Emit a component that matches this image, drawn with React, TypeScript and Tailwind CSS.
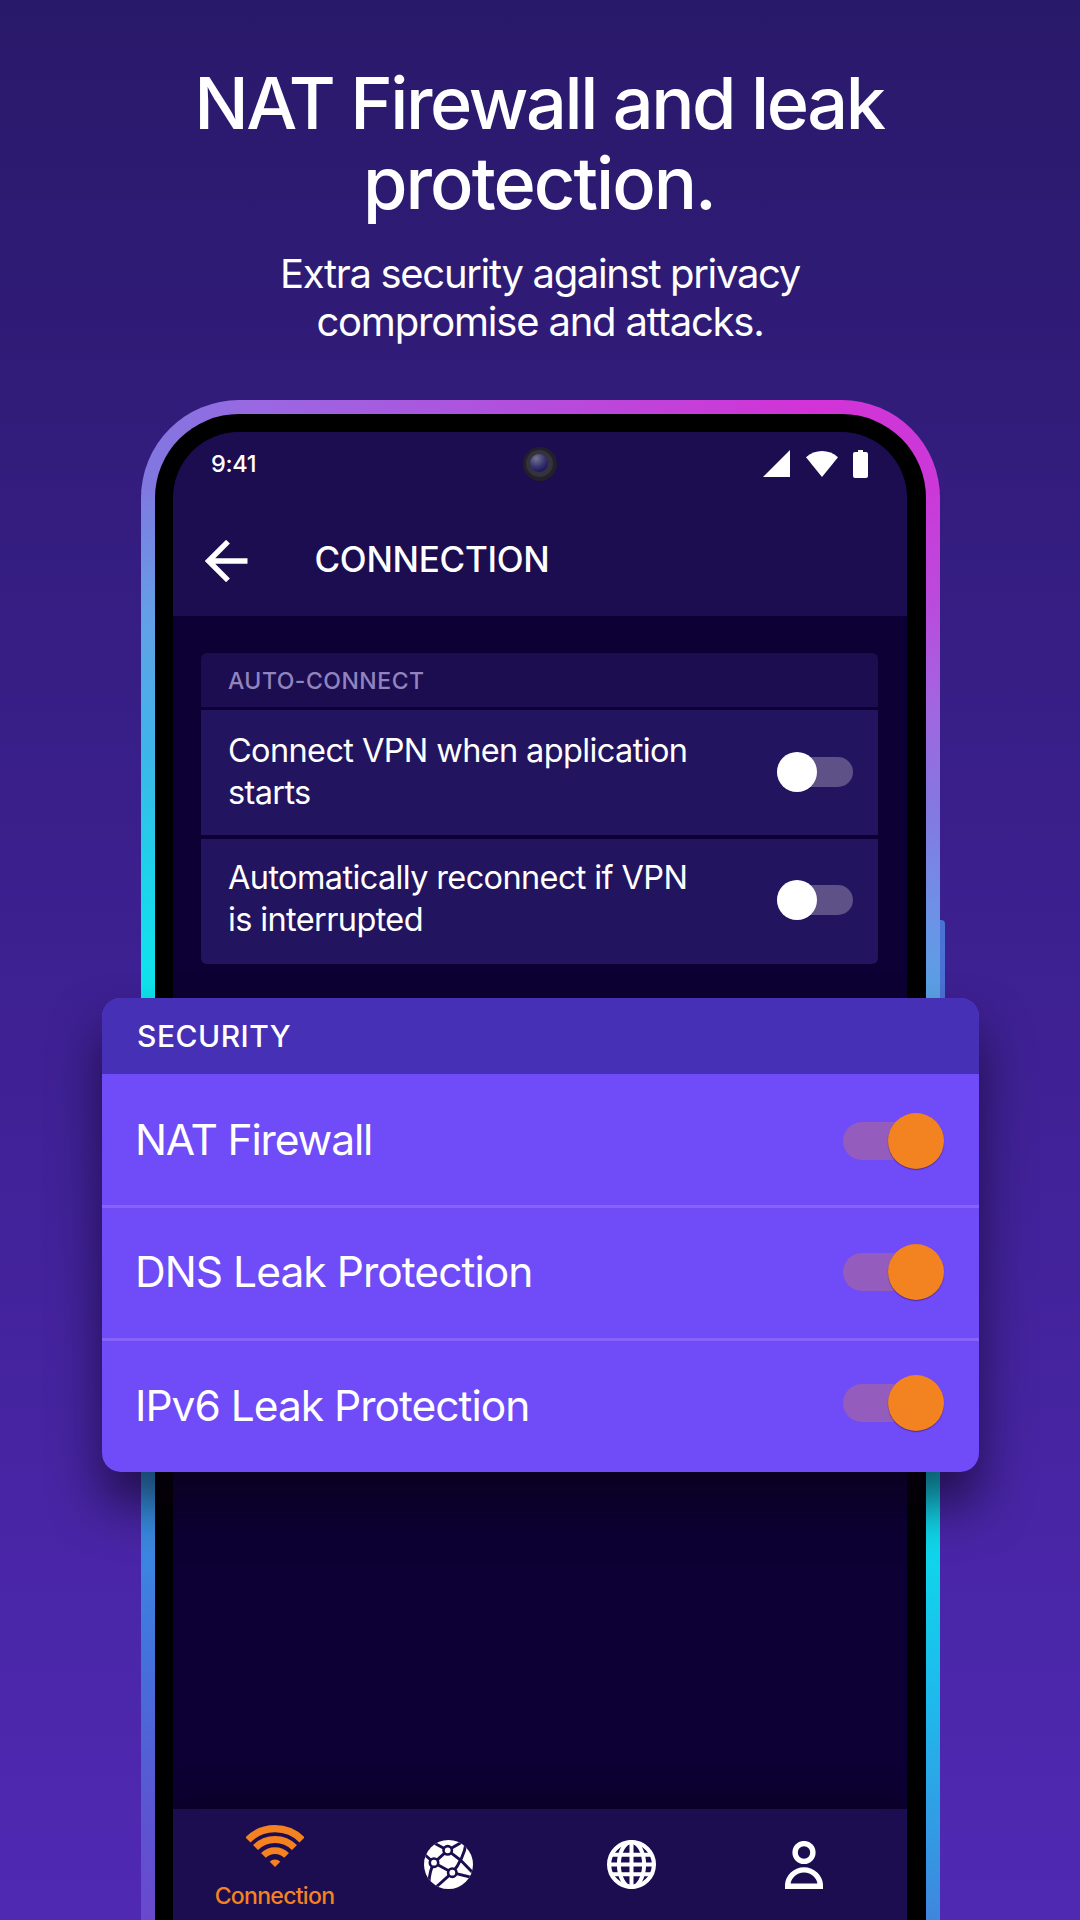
import { useState } from "react";
import clsx from "clsx";

const autoConnectItems = [
  {
    id: "startup",
    lines: ["Connect VPN when application", "starts"],
    labelClass: "-translate-y-[1.5px]",
    toggleClass: "-translate-y-px",
  },
  {
    id: "reconnect",
    lines: ["Automatically reconnect if VPN", "is interrupted"],
    labelClass: "-translate-y-[3px]",
    toggleClass: "-translate-y-[2px]",
  },
];

const securityItems = [
  {
    id: "nat",
    label: "NAT Firewall",
    rowClass: "h-[134px] border-b-3 border-[#8763fb]",
    labelClass: "tracking-[-1.15px]",
    toggleClass: "translate-y-px",
  },
  {
    id: "dns",
    label: "DNS Leak Protection",
    rowClass: "h-[133px] border-b-3 border-[#8763fb]",
    labelClass: "-translate-y-px tracking-[-0.95px]",
    toggleClass: "-translate-y-px",
  },
  {
    id: "ipv6",
    label: "IPv6 Leak Protection",
    rowClass: "h-[131px]",
    labelClass: "-translate-y-px tracking-[-1px]",
    toggleClass: "-translate-y-[4px]",
  },
];

function SignalIcon() {
  return (
    <svg width="27" height="27" viewBox="0 0 27 27" fill="white">
      <path d="M27 0V27H0Z" />
    </svg>
  );
}

function StatusWifiIcon() {
  return (
    <svg width="32" height="26" viewBox="0 0 32 26" fill="white">
      <path d="M0 6.2C9 -2 23 -2 32 6.2L16 26Z" />
    </svg>
  );
}

function BatteryIcon() {
  return (
    <svg width="15" height="28" viewBox="0 0 15 28" fill="white">
      <path d="M5 0h5v2h3a2 2 0 0 1 2 2v22a2 2 0 0 1-2 2H2a2 2 0 0 1-2-2V4a2 2 0 0 1 2-2h3Z" />
    </svg>
  );
}

function BackIcon() {
  return (
    <svg width="43" height="42" viewBox="0 0 43 42" fill="none" stroke="white" strokeWidth="5.4">
      <path d="M23 1.7 3.6 21 23 40.3M4 21H42.5" />
    </svg>
  );
}

function ConnectionIcon() {
  return (
    <svg width="58" height="42" viewBox="0 0 58 42" fill="none" stroke="#f58220">
      <clipPath id="wedge">
        <path d="M29 42 -13 0V-4H71V0Z" />
      </clipPath>
      <g clipPath="url(#wedge)">
        <circle cx="29" cy="42" r="38.3" strokeWidth="7.2" />
        <circle cx="29" cy="42" r="27.5" strokeWidth="7" />
        <circle cx="29" cy="42" r="16.4" strokeWidth="6.6" />
        <circle cx="29" cy="42" r="7.6" fill="#f58220" stroke="none" />
      </g>
    </svg>
  );
}

function NetworkIcon() {
  return (
    <svg width="49" height="49" viewBox="0 0 49 49">
      <clipPath id="ball">
        <circle cx="24.5" cy="24.5" r="24.5" />
      </clipPath>
      <g clipPath="url(#ball)">
        <rect width="49" height="49" fill="white" />
        <g fill="none" stroke="#1b0d50" strokeWidth="2.9">
          <path d="M10 3 23.7 10.3 39 1.5" />
          <path d="M23.7 10.3 36.5 20 50 34" />
          <path d="M42 3C41 12 36 24 28.3 32.7" />
          <path d="M23.7 10.3 10 22.7 28.3 32.7 50 38" />
          <path d="M0 14 10 22.7C7 28 5.5 33 5 42" />
          <path d="M28.3 32.7 11 48" />
        </g>
        <g fill="white" stroke="#1b0d50" strokeWidth="2.6">
          <circle cx="23.7" cy="10.3" r="4.2" />
          <circle cx="10" cy="22.7" r="4.2" />
          <circle cx="28.3" cy="32.7" r="4.2" />
        </g>
      </g>
    </svg>
  );
}

function GlobeIcon() {
  return (
    <svg width="49" height="49" viewBox="0 0 49 49" fill="none" stroke="white" strokeWidth="4">
      <circle cx="24.5" cy="24.5" r="22.4" strokeWidth="4.2" />
      <ellipse cx="24.5" cy="24.5" rx="12.6" ry="22.6" />
      <path d="M24.5 2V47M2 24.5H47M5 14.7H44M5 34.3H44" />
    </svg>
  );
}

function PersonIcon() {
  return (
    <svg width="38" height="48" viewBox="0 0 38 48" fill="none" stroke="white" strokeWidth="5.4">
      <circle cx="19" cy="11.5" r="8.9" />
      <path d="M2.6 45.3a16.4 16.4 0 0 1 32.8 0Z" />
    </svg>
  );
}

function Camera() {
  return (
    <div className="flex size-[34px] items-center justify-center rounded-full bg-[#232029]">
      <div className="flex size-[27px] items-center justify-center rounded-full bg-[#34323f]">
        <div className="size-[18px] -translate-x-px -translate-y-px rounded-full bg-[radial-gradient(circle_at_35%_25%,#77758f,#3a3872_45%,#1d1258_80%)]" />
      </div>
    </div>
  );
}

type ToggleProps = {
  on: boolean;
  className?: string;
  onClick: () => void;
};

function SmallToggle({ on, className, onClick }: ToggleProps) {
  return (
    <button
      onClick={onClick}
      className={clsx("flex h-10 w-[76px] items-center", className)}
    >
      <span
        className={clsx(
          "flex h-[30px] w-full items-center rounded-full bg-[#5d5187]",
          on && "justify-end"
        )}
      >
        <span className="size-10 shrink-0 rounded-full bg-white" />
      </span>
    </button>
  );
}

function LargeToggle({ on, className, onClick }: ToggleProps) {
  return (
    <button
      onClick={onClick}
      className={clsx("flex h-14 w-[101px] items-center", className)}
    >
      <span
        className={clsx(
          "flex h-[38px] w-full items-center rounded-full bg-[#935cbd]",
          on && "justify-end"
        )}
      >
        <span className="size-14 shrink-0 rounded-full bg-[#f38220] shadow-[0_1px_1px_rgba(60,20,90,0.6)]" />
      </span>
    </button>
  );
}

export default function App() {
  const [enabled, setEnabled] = useState<Record<string, boolean>>({
    nat: true,
    dns: true,
    ipv6: true,
  });

  const toggle = (id: string) =>
    setEnabled((prev) => ({ ...prev, [id]: !prev[id] }));

  return (
    <main className="relative flex h-[1920px] w-[1080px] flex-col items-center overflow-hidden bg-linear-to-b from-[#29196a] via-[#3d2091] to-[#5029b3] pt-[63px] font-['Inter',sans-serif] whitespace-nowrap text-white">
      <h1 className="mr-[2px] text-center text-[72px] leading-20 font-medium">
        <span className="tracking-[-2.4px]">NAT Firewall and leak</span>
        <br />
        <span className="tracking-[-1.95px]">protection.</span>
      </h1>
      <p className="mt-[27px] text-center text-[40px] leading-12">
        <span className="tracking-[-1.33px]">Extra security against privacy</span>
        <br />
        <span className="tracking-[-1.2px]">compromise and attacks.</span>
      </p>

      {/* Phone */}
      <div className="relative mt-[54px] ml-px h-[1520px] w-[799px] shrink-0">
        <div className="absolute top-[520px] -right-[5px] h-[120px] w-[10px] rounded-r-[4px] bg-[#4a72d4]" />
        <div className="relative flex h-full flex-col overflow-hidden rounded-t-[98px]">
          <div className="absolute inset-x-0 top-0 h-[91px] bg-[linear-gradient(90deg,#8078e0_0%,#9968e2_14%,#b44ddc_50%,#d333d6_84%,#cc38d8_100%)]" />
          <div className="absolute top-[90px] bottom-0 left-0 w-5 bg-[linear-gradient(180deg,#7f7ae0_0%,#62a0e6_9%,#3fb4e8_18%,#20d0ea_26%,#12e0ec_33%,#0be6ee_37%,#2aa6e4_67%,#3a8ae0_73%,#4470dc_82%,#5a56d2_92%,#6a48cc_100%)]" />
          <div className="absolute top-[90px] right-0 bottom-0 w-5 bg-[linear-gradient(180deg,#cb39d8_0%,#b94bdc_8%,#a265e0_15%,#8577e0_22%,#6f8fe6_29%,#57a3e4_36%,#10d8e4_67%,#10d6ea_74%,#1fb8ec_85%,#2fa0e6_92%,#3f86dc_100%)]" />

          <div className="relative mx-[14px] mt-[14px] flex flex-1 rounded-t-[84px] bg-black pt-[18px] pr-[19px] pl-[18px]">
            <div className="flex flex-1 flex-col overflow-hidden rounded-t-[66px] bg-[#0d0034]">
              <header className="h-[184px] shrink-0 bg-[#1b0d50]">
                <div className="flex h-[63px] items-center justify-between pr-[39px] pl-[38px]">
                  <span className="w-[105px] text-[23.5px] font-[450] tracking-[-0.3px]">
                    9:41
                  </span>
                  <Camera />
                  <div className="flex w-[105px] items-center">
                    <SignalIcon />
                    <div className="ml-4 flex">
                      <StatusWifiIcon />
                    </div>
                    <div className="ml-[15px] flex">
                      <BatteryIcon />
                    </div>
                  </div>
                </div>
                <div className="mt-[45px] flex h-[42px] items-center pl-8">
                  <BackIcon />
                  <h2 className="ml-[66.5px] -translate-y-[2px] text-[35px] font-[450] tracking-[-0.3px]">
                    CONNECTION
                  </h2>
                </div>
              </header>

              <section className="mt-[37px] mr-[29px] ml-7 flex flex-col overflow-hidden rounded-[6px]">
                <h3 className="mb-[3px] flex h-[54px] items-center bg-[#1b0d50] pt-[2px] pl-[27px] text-[23px] font-[450] tracking-[0.5px] text-[#9184be]">
                  AUTO-CONNECT
                </h3>
                <div className="flex flex-col gap-1">
                  {autoConnectItems.map((item) => (
                    <div
                      key={item.id}
                      className="flex h-[125px] items-center justify-between bg-[#231460] pr-[25px] pl-[27px]"
                    >
                      <p
                        className={clsx(
                          "text-[32.5px] leading-[41.5px] tracking-[-0.63px]",
                          item.labelClass
                        )}
                      >
                        {item.lines[0]}
                        <br />
                        {item.lines[1]}
                      </p>
                      <SmallToggle
                        on={!!enabled[item.id]}
                        className={item.toggleClass}
                        onClick={() => toggle(item.id)}
                      />
                    </div>
                  ))}
                </div>
              </section>

              <nav className="mt-auto flex h-[111px] shrink-0 bg-[#1b0d50] pt-4 shadow-[0_-8px_30px_rgba(0,0,0,0.35)]">
                <div className="flex w-[203px] flex-col items-center text-[#f58220]">
                  <ConnectionIcon />
                  <span className="mt-[15px] text-[23px] leading-[28px] font-[450] tracking-[-0.7px]">
                    Connection
                  </span>
                </div>
                <div className="mt-[15px] ml-12">
                  <NetworkIcon />
                </div>
                <div className="mt-[15px] ml-[134px]">
                  <GlobeIcon />
                </div>
                <div className="mt-4 ml-[129px]">
                  <PersonIcon />
                </div>
              </nav>
            </div>
          </div>
        </div>
      </div>

      {/* Security panel, lies over the phone */}
      <section className="absolute top-[998px] left-[102px] w-[877px] overflow-hidden rounded-[19px] bg-[#704bf8] shadow-[0_32px_50px_rgba(10,0,20,0.6)]">
        <h3 className="flex h-[76px] items-center bg-[#4630b6] pl-[35px] text-[30px] font-[450] tracking-[0.5px]">
          SECURITY
        </h3>
        {securityItems.map((item) => (
          <div
            key={item.id}
            className={clsx(
              "flex items-center justify-between pr-[35px] pl-[33px]",
              item.rowClass
            )}
          >
            <span className={clsx("text-[42.5px]", item.labelClass)}>
              {item.label}
            </span>
            <LargeToggle
              on={!!enabled[item.id]}
              className={item.toggleClass}
              onClick={() => toggle(item.id)}
            />
          </div>
        ))}
      </section>
    </main>
  );
}
